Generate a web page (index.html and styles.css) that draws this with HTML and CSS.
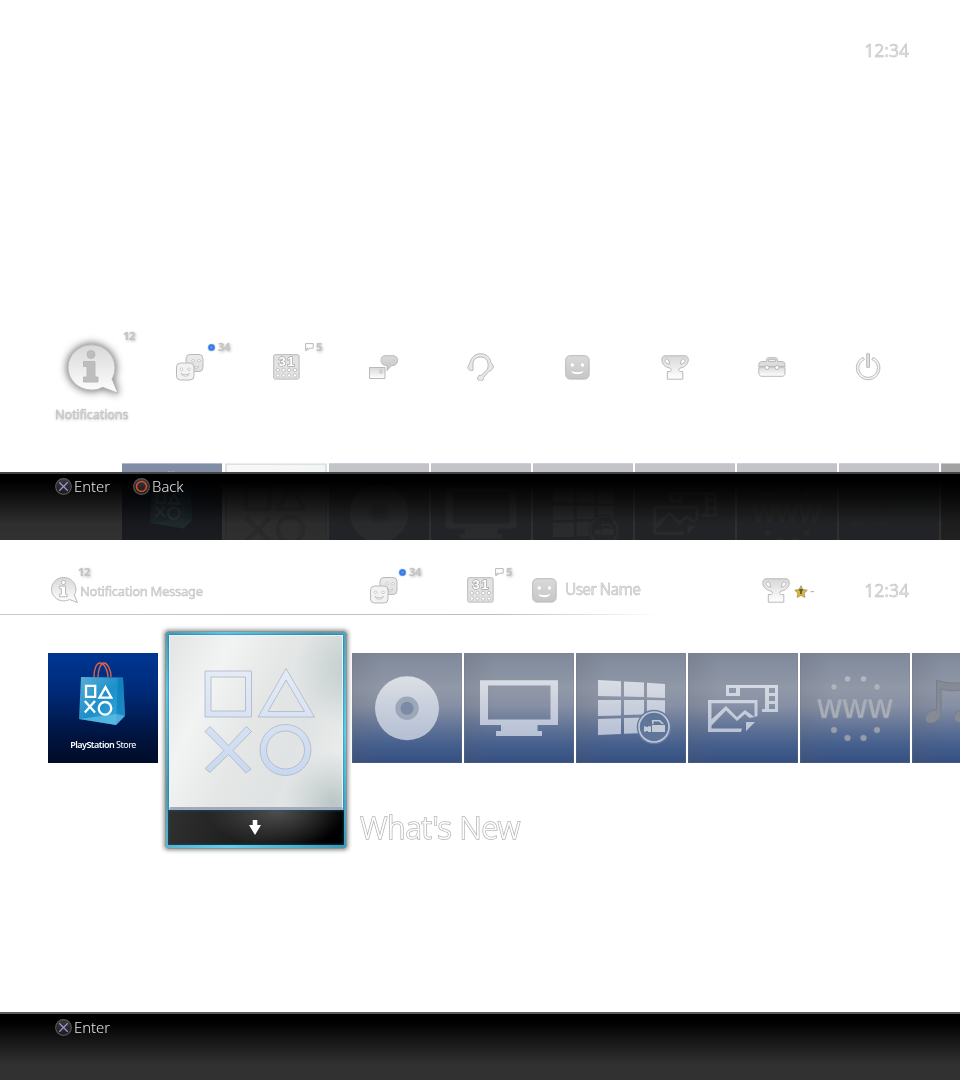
FILE: index.html
```html
<!DOCTYPE html>
<html lang="en">
<head>
<meta charset="utf-8">
<title>Home menu</title>
<link rel="stylesheet" href="styles.css">
</head>
<body>
<svg class="defs" width="0" height="0" aria-hidden="true">
  <defs>
    <linearGradient id="g-gray" x1="0" y1="0" x2="0" y2="1"><stop offset="0" stop-color="#d8d8d8"/><stop offset="1" stop-color="#fff"/></linearGradient>
    <linearGradient id="g-gray2" x1="0" y1="0" x2="0" y2="1"><stop offset="0" stop-color="#dadada"/><stop offset="1" stop-color="#c6c6c6"/></linearGradient>
    <linearGradient id="g-tile" gradientUnits="userSpaceOnUse" x1="0" y1="22" x2="0" y2="92"><stop offset="0" stop-color="#dcdfe5"/><stop offset="1" stop-color="#b1bcd2"/></linearGradient>
    <linearGradient id="g-warm" gradientUnits="userSpaceOnUse" x1="0" y1="22" x2="0" y2="92"><stop offset="0" stop-color="#b4b9c1"/><stop offset="1" stop-color="#9298a4"/></linearGradient>
    <linearGradient id="g-glyph" gradientUnits="userSpaceOnUse" x1="0" y1="0" x2="0" y2="108"><stop offset="0" stop-color="#e6ecf7"/><stop offset="1" stop-color="#c8d8f0"/></linearGradient>
    <linearGradient id="g-bag" x1="0" y1="0" x2="1" y2="1"><stop offset="0" stop-color="#5aaed8"/><stop offset=".5" stop-color="#1c8fca"/><stop offset="1" stop-color="#3eb2df"/></linearGradient>
    <radialGradient id="g-blue"><stop offset="0" stop-color="#5aa0ff"/><stop offset=".65" stop-color="#2f6fe0"/><stop offset="1" stop-color="#cfdcf0"/></radialGradient>
    <linearGradient id="g-btn" x1="0" y1="0" x2="0" y2="1"><stop offset="0" stop-color="#3a3a3c"/><stop offset="1" stop-color="#1a1a1c"/></linearGradient>
  </defs>
  <symbol id="info" viewBox="0 0 52 50">
    <path class="ol" fill="url(#g-gray)" d="M24.500.8C37.500.8 48 11 48 23.500c0 4.500-1 8-3 11.500l6 14.200-15.500-6C32 45.300 28.500 46 24.500 46 11.500 46 1 36 1 23.500S11.500.8 24.500.8Z"/>
    <path class="ol letter" d="M20 10.500a4 4 0 1 0 8 0 4 4 0 1 0-8 0ZM16.500 17.500H28V33h3v5H16.500v-5H20V22.500h-3.500Z"/>
  </symbol>
  <symbol id="faces" viewBox="0 0 28 27">
    <rect class="ol" fill="url(#g-gray2)" fill-opacity=".55" x="10" y=".5" width="17" height="17" rx="4"/>
    <path class="ol thin" fill="#fff" d="M18.500 12.500c1.500.8 2.500.8 4-.5-.3 2.500-2 3.500-4 2.500ZM17 5.500a1.300 1.300 0 1 0 .1 0M23 5.500a1.300 1.300 0 1 0 .1 0"/>
    <path class="ol" fill="#f2f2f2" d="M4.500 9H14a4 4 0 0 1 4 4v9a4 4 0 0 1-4 4H4.500a4 4 0 0 1-4-4v-9a4 4 0 0 1 4-4Z"/>
    <path class="ol thin" fill="#fff" d="M5 19.500c2.500 1.700 6 1.700 8.500 0-.8 3.500-7.500 3.500-8.500 0ZM5.500 14a1.300 1.300 0 1 0 .1 0M13 14a1.300 1.300 0 1 0 .1 0"/>
  </symbol>
  <symbol id="calendar" viewBox="0 0 27 26">
    <rect class="ol" fill="#e2e2e2" x=".7" y=".7" width="25.400" height="24.400" rx="1.500"/>
    <g class="ol thin" fill="#fff"><circle cx="4.800" cy="16" r="1.700"/><circle cx="10.500" cy="16" r="1.700"/><circle cx="16.200" cy="16" r="1.700"/><circle cx="22" cy="16" r="1.700"/><circle cx="4.800" cy="21.500" r="1.700"/><circle cx="10.500" cy="21.500" r="1.700"/><circle cx="16.200" cy="21.500" r="1.700"/><circle cx="22" cy="21.500" r="1.700"/></g>
  </symbol>
  <symbol id="message" viewBox="0 0 30 26">
    <rect class="ol" fill="url(#g-gray)" x="1.500" y="12.500" width="15.500" height="11"/>
    <rect class="ol" fill="#fff" x="12" y="15" width="2" height="3"/>
    <path class="ol" fill="url(#g-gray2)" d="M17 .7h8c3 0 4.500 2 4.500 4.500S28 10.500 25 10.500l-2 .3-4 4.700.2-4.700C15 10.500 13 8.500 13 5.500S14.500.7 17 .7Z"/>
  </symbol>
  <symbol id="headset" viewBox="0 0 28 28">
    <path class="ol" fill="#e8e8e8" d="M1 13.500 3 9.500C4.500 4 8.500.7 13.500.7c5.500 0 9.500 3.300 10.500 8.800l2.500 3.500c-.5 3-2.200 5-4.500 5.300l-5.500 6.200a3 3 0 1 1-2-2.200l6-6.300C22.500 9 19.500 4 13.500 4 9 4 6 6.800 6 11v6.300C3 18 .5 16.500 1 13.500Z"/>
  </symbol>
  <symbol id="profile" viewBox="0 0 25 25">
    <rect class="ol" fill="url(#g-gray2)" x=".7" y=".7" width="23.400" height="23.400" rx="4.500"/>
    <g fill="#fff"><circle cx="7.300" cy="10" r="1.700"/><circle cx="17.500" cy="10" r="1.700"/><path d="M6.800 16c3 1.600 8 1.600 11 0 .8 4.200-11.800 4.200-11 0Z"/></g>
  </symbol>
  <symbol id="trophy" viewBox="0 0 28 25">
    <path class="ol" fill="url(#g-gray)" d="M4 .8h20c2.200 0 3.300 1.700 3.300 4 0 4-3.500 8-8.300 8.200l-1.500 1.800c.2 1.200 1 1.700 2.700 1.700h1.600v7.700H6.300v-7.700H8c1.500 0 2.500-.5 2.500-1.700L9 13C4.200 12.500.8 9 .8 4.800.8 2.500 1.800.8 4 .8Z"/>
    <path class="ol" fill="#fff" d="M4.500 4.500C5.500 3.500 7 4 7.500 5l1.300 4C6.500 9.500 3 7 4.500 4.500ZM23.500 4.500C22.500 3.500 21 4 20.500 5l-1.300 4c2.300.5 5.800-2 4.300-4.500Z"/>
  </symbol>
  <symbol id="toolbox" viewBox="0 0 28 20">
    <path class="ol" fill="url(#g-gray)" d="M2.500 10h22c1.500 0 2.500 0 2.500.8V16c0 2-1 3.300-3 3.300H4c-2 0-3.200-1.300-3.200-3.300v-5.200C.8 10 1.500 10 2.500 10Z"/>
    <path class="ol" fill="#dcdcdc" fill-rule="evenodd" d="M8.500 4.500V3c0-1.500.8-2.300 2.300-2.300h6.400c1.500 0 2.300.8 2.300 2.300v1.500H24c2 0 3 1.200 3 3v2H.8v-2c0-1.800 1-3 3-3ZM10.500 4.500h7V2.700h-7Z"/>
    <circle class="ol" fill="#fff" cx="9" cy="10.500" r="2"/><circle class="ol" fill="#fff" cx="19" cy="10.500" r="2"/>
  </symbol>
  <symbol id="power" viewBox="0 0 26 28">
    <path class="ol" fill="#f4f4f4" d="M8 4.300 9.500 6.500a9.300 9.300 0 1 0 7.300 0L18.200 4.300a11.800 11.800 0 1 1-10.200 0Z"/>
    <rect class="ol" fill="#e0e0e0" x="11.700" y=".8" width="2.800" height="13.500"/>
  </symbol>
  <symbol id="flag" viewBox="0 0 9 8"><path class="ol" fill="#fff" d="M.6 7.500V.6h7.600v4.600H4.800L3 6.800V5.200H1.800v2.300Z"/></symbol>
  <symbol id="dot" viewBox="0 0 9 9"><circle cx="4.500" cy="4.500" r="4" fill="url(#g-blue)"/></symbol>
  <symbol id="star" viewBox="0 0 14 13"><path fill="#e0b62a" stroke="#9d9167" stroke-width=".8" d="m7 .7 1.900 3.900 4.400.6-3.200 3 .8 4.200L7 10.400l-3.900 2 .8-4.200-3.200-3 4.400-.6Z"/><path fill="#56604f" d="M5.500 4h3.200v2.200H7.800V9H6V6H5Z"/></symbol>
  <symbol id="btn-x" viewBox="0 0 16 16"><circle cx="8" cy="8" r="7.400" fill="url(#g-btn)" stroke="#58585c" stroke-width="1"/><path d="m4 4 8 8M12 4l-8 8" stroke="#9499d0" stroke-width="1.200"/></symbol>
  <symbol id="btn-o" viewBox="0 0 16 16"><circle cx="8" cy="8" r="7.400" fill="url(#g-btn)" stroke="#5c5858" stroke-width="1"/><circle cx="8" cy="8" r="4.700" fill="none" stroke="#e04a2c" stroke-width="1.400"/></symbol>

  <symbol id="art-store" viewBox="0 0 110 110">
    <path d="M46 24c0-7 2-14 6-14s8 7 8 14M50 24c0-8 3-14 6-14s7 6 7 14" fill="none" stroke="#dc6446" stroke-width="1.400"/>
    <path fill="url(#g-bag)" d="m33 24 42 .5 2 38-9 9.500-37-6Z"/><path fill="#0878b8" fill-opacity=".6" d="m70 24.500 5 0 2 38-9 9.500Z"/><path fill="#6bc4e8" fill-opacity=".6" d="m31 66 38-5 8 2-9 9Z"/>
    <g fill="none" stroke="#fff" stroke-width="2.300"><path d="M38 32.800h9.200v11H38ZM57.500 34.200l5.800 10.500H51.500ZM36.800 48l10.200 11.500M47 48 36.800 59.500"/><circle cx="57" cy="55.300" r="6.300"/></g>
  </symbol>
  <symbol id="art-shapes" viewBox="0 0 112 110">
    <g fill="url(#g-glyph)" stroke="#adb5c2" stroke-width=".8" fill-rule="evenodd">
      <path d="M1 4h46.500v46H1ZM7 10v34h34.500V10ZM82 1.500 110.500 50H54ZM82 13 64 44.500h36.500Z"/>
      <path d="m1 64.500 5-5 18.500 19L42.500 59.500l5 5-18.500 19 18 18.500-5 4L24.500 87.500 6 105.500l-5-4L20 83.500Z"/>
      <path d="M56 83a25.500 25.500 0 1 0 51 0 25.500 25.500 0 1 0-51 0ZM62.500 83a19 19 0 1 1 38 0 19 19 0 1 1-38 0Z"/>
    </g>
  </symbol>
  <symbol id="art-disc" viewBox="0 0 110 110"><circle cx="55" cy="55.300" r="32" fill="url(#g-tile)"/><circle cx="55" cy="55.300" r="11.700" fill="#9ca8b9"/><circle cx="55" cy="55.300" r="6.500" fill="#7c8ba5"/></symbol>
  <symbol id="art-tv" viewBox="0 0 110 110"><path fill="url(#g-tile)" fill-rule="evenodd" d="M16 27.300h78V72H73.500v6H78v5H32v-5h5v-6H16ZM24 32.500V66.500h62.500v-34Z"/></symbol>
  <symbol id="art-win" viewBox="0 0 110 110">
    <path fill="url(#g-tile)" d="m22 27 23 1.300V43.500L22 43ZM48 28.500l20 1V44l-20-.5ZM71 29.700l18 1.200V45l-18-.7ZM22 47h23v15.500L22 63ZM48 47h20v14.500L48 62ZM71 47l18 .3V61l-18 .5ZM22 66l23-.8V81l-23 1ZM48 65l20-.5V80l-20 .7Z"/>
    <circle cx="78" cy="74" r="17.300" fill="#687b9d"/><circle cx="78" cy="74" r="15" fill="#60759a" stroke="#c0c9da" stroke-width="1.600"/>
    <path fill="#c3cbd9" d="M68 73l3 1h1v-.8h3V79h-3v-1h-1l-3 1ZM76 72h13v7H76ZM76 67h8l4 4h-2l-3-2.500h-5.500V71H76Z"/>
  </symbol>
  <symbol id="art-photo" viewBox="0 0 110 110">
    <g fill="url(#g-tile)" fill-rule="evenodd"><path d="M38 32h52v27H74v-3h3V35H52v8H38ZM41 35v5h7v-5ZM81 35v5h6v-5ZM81 43v5h6v-5ZM81 51v5h6v-5Z"/>
    <path d="M20 47h49.500v16l-3 1V50.200H23.500v16L38 53l11 11 8-7 9.500 7-5 1-4.500-4-8 7-11-10.500-14.500 15V75.500H54l-1 3.500H20ZM58 69h9l-9 9Z"/></g>
  </symbol>
  <symbol id="art-www" viewBox="0 0 110 110"><g fill="url(#g-warm)" stroke="#8791a3" stroke-width=".4"><circle cx="34" cy="34" r="3"/><circle cx="47.500" cy="26" r="3"/><circle cx="63.500" cy="26" r="3"/><circle cx="77" cy="34" r="3"/><circle cx="34" cy="77" r="3"/><circle cx="47.500" cy="85" r="3"/><circle cx="63.500" cy="85" r="3"/><circle cx="77" cy="77" r="3"/></g></symbol>
  <symbol id="art-music" viewBox="0 0 110 110"><path fill="#858a95" stroke="#707988" stroke-width=".7" d="M24.500 27c12 4 22 4 33 0v36c-2 5-7 7.500-11 6.500-5-1-6-6-2.500-9.500 2-2.500 6-3.500 9-3V36c-8 2.500-16 2.500-24 0v26c-2 6-8 9-12.500 8-4-1-4-7 0-10.500 2.500-2.500 5-3 8-2.500Z"/></symbol>
</svg>

<main class="page">
  <section class="screen screen-menu">
    <header class="top-clock"><time class="outline clock">12:34</time></header>
    <nav class="functions">
      <div class="fn fn-focus"><svg class="ic-info-lg"><use href="#info"/></svg><span class="badge badge-info">12</span><span class="fn-label">Notifications</span></div>
      <div class="fn"><svg class="ic-faces"><use href="#faces"/></svg><span class="badge badge-friends"><svg class="ic-dot"><use href="#dot"/></svg>34</span></div>
      <div class="fn"><svg class="ic-cal"><use href="#calendar"/><text class="cal" x="5.500" y="12" textLength="16">31</text></svg><span class="badge badge-cal"><svg class="ic-flag"><use href="#flag"/></svg>5</span></div>
      <div class="fn"><svg class="ic-msg"><use href="#message"/></svg></div>
      <div class="fn"><svg class="ic-head"><use href="#headset"/></svg></div>
      <div class="fn"><svg class="ic-profile"><use href="#profile"/></svg></div>
      <div class="fn"><svg class="ic-trophy"><use href="#trophy"/></svg></div>
      <div class="fn"><svg class="ic-tool"><use href="#toolbox"/></svg></div>
      <div class="fn"><svg class="ic-power"><use href="#power"/></svg></div>
    </nav>
    <div class="strip">
      <div class="tile store"><svg class="art"><use href="#art-store"/></svg></div>
      <div class="tile light"><svg class="shapes"><use href="#art-shapes"/></svg></div>
      <div class="tile"><svg class="art"><use href="#art-disc"/></svg></div>
      <div class="tile"><svg class="art"><use href="#art-tv"/></svg></div>
      <div class="tile"><svg class="art"><use href="#art-win"/></svg></div>
      <div class="tile"><svg class="art"><use href="#art-photo"/></svg></div>
      <div class="tile"><svg class="art" viewBox="0 0 110 110"><use href="#art-www" width="110" height="110"/><text class="www" x="17" y="64.500" textLength="76" lengthAdjust="spacingAndGlyphs">WWW</text></svg></div>
      <div class="tile"><svg class="art"><use href="#art-music"/></svg></div>
      <div class="tile gray"></div>
    </div>
    <footer class="hints hints-clear">
      <span class="hint"><svg class="ic-btn"><use href="#btn-x"/></svg>Enter</span>
      <span class="hint"><svg class="ic-btn"><use href="#btn-o"/></svg>Back</span>
    </footer>
  </section>

  <section class="screen screen-home">
    <header class="status">
      <div class="st st-note"><svg class="ic-info"><use href="#info"/></svg><span class="badge">12</span><span class="outline note">Notification Message</span></div>
      <div class="st st-friends"><svg class="ic-faces"><use href="#faces"/></svg><span class="badge"><svg class="ic-dot"><use href="#dot"/></svg>34</span></div>
      <div class="st st-cal"><svg class="ic-cal"><use href="#calendar"/><text class="cal" x="5.500" y="12" textLength="16">31</text></svg><span class="badge"><svg class="ic-flag"><use href="#flag"/></svg>5</span></div>
      <div class="st st-user"><svg class="ic-profile"><use href="#profile"/></svg><span class="outline user">User Name</span></div>
      <div class="st st-trophy"><svg class="ic-trophy"><use href="#trophy"/></svg><svg class="ic-star"><use href="#star"/></svg><span class="level">-</span></div>
      <time class="outline clock">12:34</time>
    </header>
    <div class="rule"></div>
    <div class="content">
      <div class="tile store"><svg class="art"><use href="#art-store"/></svg><span class="store-name"><b>PlayStation</b> Store</span></div>
      <div class="focus">
        <div class="focus-art"><svg class="shapes"><use href="#art-shapes"/></svg></div>
        <div class="focus-bar"><svg class="arrow" viewBox="0 0 12 15"><path fill="#fff" d="M3.700 0h4.600v5H12l-6 10L0 5h3.700Z"/></svg></div>
      </div>
      <div class="rest">
        <div class="tiles">
          <div class="tile"><svg class="art"><use href="#art-disc"/></svg></div>
          <div class="tile"><svg class="art"><use href="#art-tv"/></svg></div>
          <div class="tile"><svg class="art"><use href="#art-win"/></svg></div>
          <div class="tile"><svg class="art"><use href="#art-photo"/></svg></div>
          <div class="tile"><svg class="art" viewBox="0 0 110 110"><use href="#art-www" width="110" height="110"/><text class="www" x="17" y="64.500" textLength="76" lengthAdjust="spacingAndGlyphs">WWW</text></svg></div>
          <div class="tile"><svg class="art"><use href="#art-music"/></svg></div>
        </div>
        <h1 class="title">What's New</h1>
      </div>
    </div>
    <footer class="hints"><span class="hint"><svg class="ic-btn"><use href="#btn-x"/></svg>Enter</span></footer>
  </section>
</main>
</body>
</html>
```

FILE: styles.css
```css
* { box-sizing: border-box; }
body { margin: 0; background: #fff; font-family: "Noto Sans", "Open Sans", sans-serif; }
svg { display: block; flex: none; }
.defs { position: absolute; }
.page { width: 960px; height: 1080px; overflow: hidden; will-change: transform; }
.screen { height: 540px; display: flex; flex-direction: column; overflow: hidden; position: relative; }

.ol { stroke: #b9b9b9; stroke-width: 1px; vector-effect: non-scaling-stroke; }
.ol > * { vector-effect: non-scaling-stroke; }
.thin { stroke-width: .8px; }
.letter { fill: var(--letter, #fff); }
.cal { font: bold 13px "Liberation Sans", sans-serif; fill: #fff; stroke: #a4a4a4; stroke-width: 1.300px; paint-order: stroke fill; }
.www { font: 700 26.500px "Noto Sans", sans-serif; fill: #a9adb5; stroke: #8a93a3; stroke-width: .4px; }

.outline { color: #dedede; -webkit-text-stroke: .4px #b8b8b8; white-space: nowrap; }
.clock { font-size: 17.500px; line-height: 24px; letter-spacing: 0; }
.top-clock { height: 332px; padding: 38px 51px 0 0; text-align: right; }

.functions { display: grid; grid-template-columns: repeat(9, 97px); padding-left: 44px; height: 131px; }
.fn { height: 70px; display: flex; align-items: center; justify-content: center; position: relative; }
.ic-info-lg { --letter: #bdbdbd; width: 52px; height: 50px; margin: 3px 0 0 1px; overflow: visible; filter: drop-shadow(0 0 4px #888) drop-shadow(0 0 2px #bbb); }
.ic-faces { width: 28px; height: 27px; }
.ic-cal { width: 27px; height: 26px; }
.ic-msg { width: 30px; height: 26px; margin-top: 2px; margin-right: 1px; }
.ic-head { width: 28px; height: 28px; }
.ic-profile { width: 25px; height: 25px; }
.ic-trophy { width: 28px; height: 25px; }
.ic-tool { width: 28px; height: 20px; }
.ic-power { width: 26px; height: 28px; margin-right: 1px; }
.ic-dot { width: 9px; height: 9px; }
.ic-flag { width: 9px; height: 8px; }
.badge { position: absolute; display: flex; align-items: center; gap: 2px; font-size: 11px; line-height: 12px; font-weight: 700; color: #c4c4c4; text-shadow: 0 0 1px #ccc, 1px 1px 3px #bbb; letter-spacing: -.4px; }
.badge-info { left: 79px; top: -2px; }
.badge-friends { left: 66px; top: 9px; }
.badge-cal { left: 67px; top: 9px; }
.fn-label { position: absolute; top: 75px; left: 11px; font-size: 12.500px; line-height: 16px; color: #ddd; -webkit-text-stroke: .4px #b3b3b3; text-shadow: 0 1px 3px #bbb; letter-spacing: -.08px; }

.tile { width: 110px; height: 110px; flex: none; position: relative; border: 1px solid rgba(110,122,145,.25); background: linear-gradient(90deg, rgba(90,90,100,.18), transparent 30%), linear-gradient(#7f899b, #9199a8 32%, #8790a4 48%, #667799 65%, #47618f 82%, #344f80); background-origin: border-box; }
.tile .art { position: absolute; inset: -1px; width: calc(100% + 2px); height: calc(100% + 2px); }
.store { background: linear-gradient(#003693, #002a78 35%, #001440 75%, #000c28); border: 0; }
.tile.store .art { inset: 0; width: 100%; height: 100%; }
.light { background: linear-gradient(135deg, #f1f1f1, #e6e8e8 60%, #d5dada); border: 2px solid #b9c4c6; }
.gray { background: #444; }

.strip { height: 77px; display: flex; gap: 2px; padding-left: 122px; overflow: hidden; position: relative; }
.strip .tile { width: 100px; height: 100px; }
.strip .tile:not(.store):not(.light):not(.gray) { background: linear-gradient(#87888f, #878a92 15%, #7f889a 50%, #47618f 82%); }
.strip .store { margin-right: 1px; background: linear-gradient(#001c4c, #001644 50%, #001030); }
.strip .light { width: 102px; display: flex; align-items: center; justify-content: center; }
.strip .light .shapes { width: 64px; height: 63px; filter: brightness(.8); }
.strip::after { content: ""; position: absolute; inset: 0 0 auto; height: 9px; background: rgba(255,255,255,.5); border-top: 1px solid rgba(255,255,255,.4); }

.hints { position: absolute; inset: auto 0 0; height: 68px; display: flex; align-items: flex-start; gap: 22px; padding: 4px 0 0 55px; border-top: 2px solid #5c5c5c; background: linear-gradient(#000, #000 12%, #161616 40%, #303030 75%, #323232); background-clip: padding-box; }
.hints-clear { padding-top: 3px; gap: 23px; background: linear-gradient(#000, #000 12%, rgba(8,8,8,.95) 40%, rgba(26,26,26,.91) 75%, rgba(29,29,29,.91)); border-color: #444; }
.hint { display: flex; align-items: center; gap: 2px; font-size: 14.800px; font-weight: 300; line-height: 18px; color: #e4e4e4; }
.ic-btn { width: 17px; height: 17px; }

.status { height: 74px; display: flex; position: relative; }
.st { position: absolute; display: flex; align-items: center; height: 28px; top: 36px; }
.st-note { left: 51px; }
.st-note .badge { left: 27px; top: -10px; }
.ic-info { width: 27px; height: 26px; }
.note { font-size: 13px; margin-left: 2px; margin-top: 2px; letter-spacing: -.3px; }
.st-friends { left: 370px; }
.st-friends .badge, .st-cal .badge { left: 28px; top: -10px; }
.st-cal { left: 467px; }
.st-user { left: 532px; }
.user { font-size: 15.500px; margin-left: 8px; margin-top: -3px; letter-spacing: -.7px; }
.st-trophy { left: 762px; }
.ic-star { width: 14px; height: 13px; margin: 2px 2px 0 4px; }
.level { color: #b8b8b8; font-size: 14px; }
.status .clock { position: absolute; right: 51px; top: 38px; }
.rule { height: 1px; width: 660px; background: linear-gradient(90deg, #c8c8c8, #bdbdbd 75%, transparent); }

.content { display: flex; align-items: flex-start; padding: 16px 0 0 48px; width: 1100px; }
.content > .store { margin-top: 22px; }
.store-name { position: absolute; left: 0; right: 0; top: 85px; text-align: center; color: #fff; font-size: 9px; line-height: 14px; letter-spacing: -.5px; white-space: nowrap; }
.store-name b { font-weight: 600; }
.focus { width: 182px; height: 218px; margin: 0 5px 0 7px; padding: 3px 2px; border: 1px solid #899; border-radius: 3px; background: linear-gradient(135deg, #4d9bb2, #62c9e9 15%, #559bb1 40%, #64cdf0 70%, #3f97b3); box-shadow: 0 0 4px 1px #888; display: flex; flex-direction: column; }
.focus-art { height: 175px; margin: 0 1px; border: 1px solid #d8fbff; border-bottom: 3px solid #a3a9bd; display: flex; align-items: center; justify-content: center; background: radial-gradient(circle at 105% 20%, #c3cdcd, transparent 25%), radial-gradient(circle at 95% 98%, #bac5c5, transparent 22%), linear-gradient(115deg, #e3e5e5, #f2f3f3 25%, #e5e7e7 48%, #e0e3e3 70%, #eff0f0); box-shadow: 0 0 2px #247; }
.focus-art .shapes { width: 112px; height: 110px; margin-left: 7px; }
.focus-bar { flex: 1; background: radial-gradient(ellipse 40% 110% at 62% 0, #505050, transparent), linear-gradient(100deg, #303030, #1a1a1a 50%, #000 90%); box-shadow: inset 0 0 3px #086078; display: flex; align-items: center; justify-content: center; }
.arrow { width: 12px; height: 15px; margin: 0 2px 1px 0; }
.rest { padding-top: 22px; }
.tiles { display: flex; gap: 2px; }
.title { margin: 42px 0 0 8px; font-size: 30.500px; line-height: 44px; font-weight: 300; color: #fff; -webkit-text-stroke: 1.500px #b4b4b4; paint-order: stroke fill; letter-spacing: -.12px; white-space: nowrap; }
```
